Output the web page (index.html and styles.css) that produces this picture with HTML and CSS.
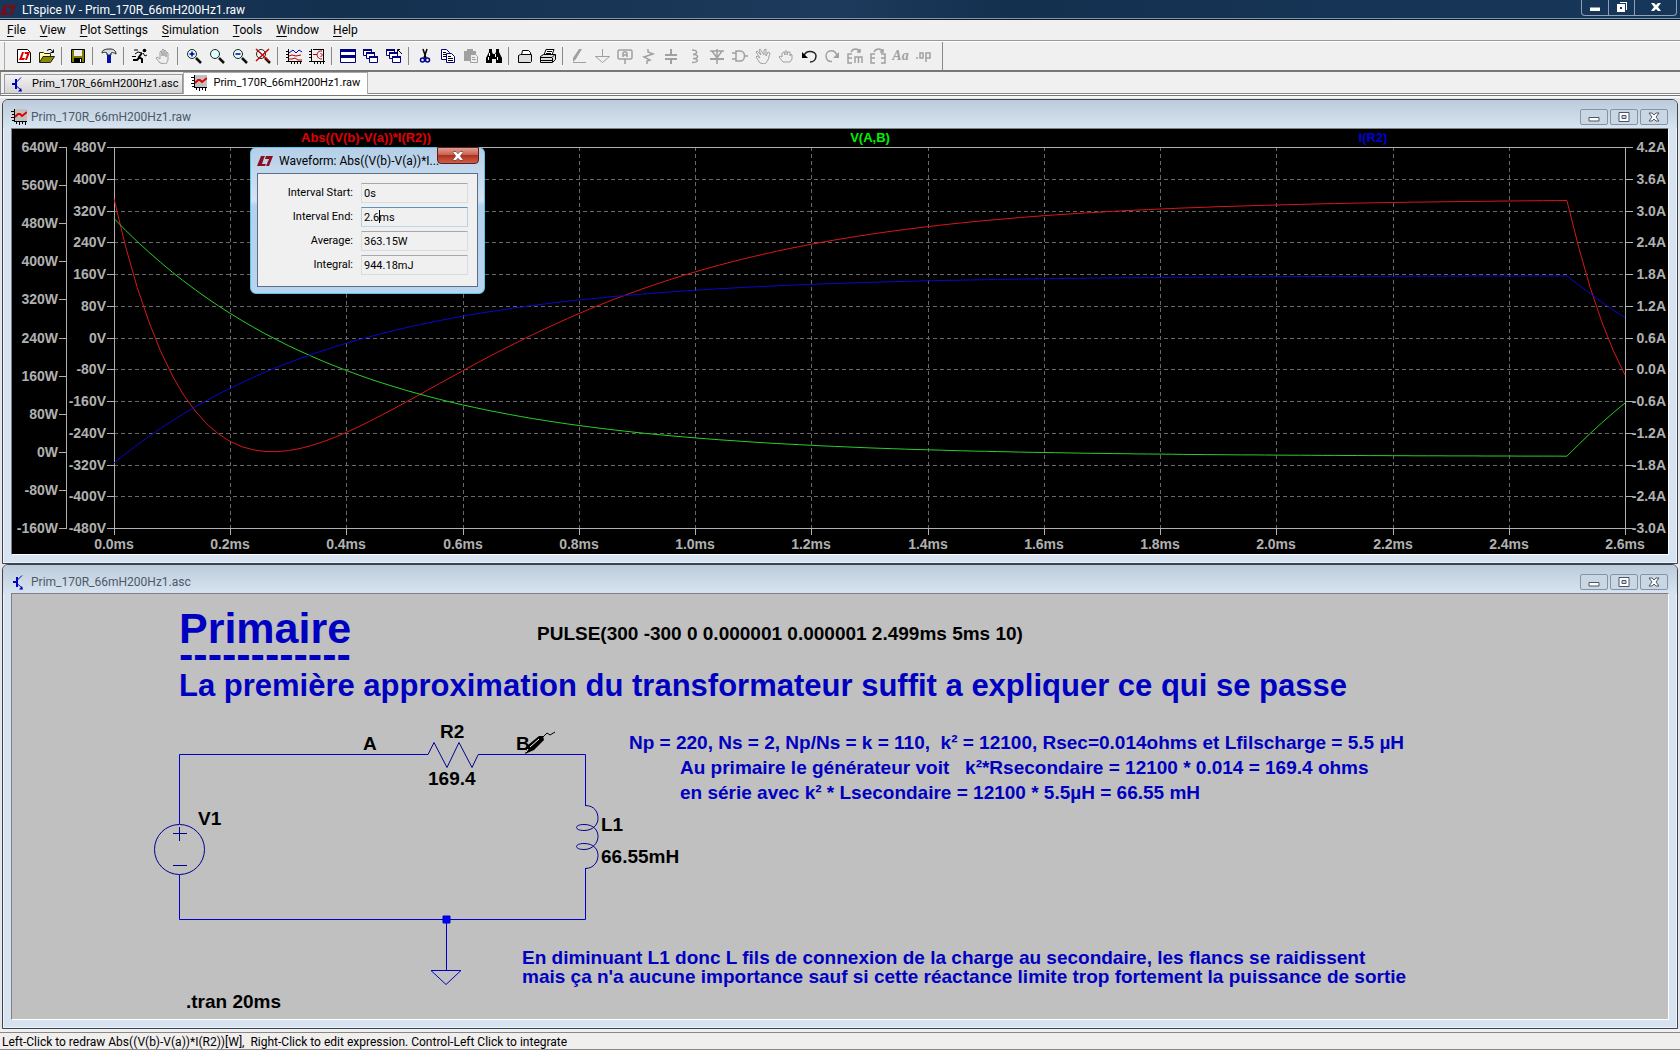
FILE: index.html
```html
<!DOCTYPE html>
<html lang="en">
<head>
<meta charset="utf-8">
<title>LTspice IV - Prim_170R_66mH200Hz1.raw</title>
<link rel="stylesheet" href="styles.css">
</head>
<body>
<svg class="defs" width="0" height="0" aria-hidden="true">
  <defs>
    <symbol id="logo" viewBox="0 0 16 12"><path d="M4 1h4L7 3 5 9h4l-1 2H0zM9 1h7l-4 10H9l3-7H8z"/></symbol>
    <symbol id="wave" viewBox="0 0 16 16"><path fill="#c0c0c0" d="M3 0h13v13H3z"/><path fill="none" stroke="#000" d="M3.500 0v13M3 12.500h13M0 2.500h3M1 5.500h2M0 8.500h3M1 11.500h2M5.500 13v2M8.500 13v3M11.500 13v2M14.500 13v3"/><path fill="none" stroke="#e00000" stroke-width="2" d="M4 8l3-3h2l2 2 5-4"/></symbol>
    <symbol id="bjt" viewBox="0 0 12 16"><path fill="none" stroke="#0000c0" stroke-width="2" d="M4 3v10M0 8h4"/><path fill="none" stroke="#0000c0" d="M4 6.500l5-5M4 9.500l5 4.500"/><path fill="#0000c0" d="M10 15.500H6L9 12z"/></symbol>
    <symbol id="min" viewBox="0 0 12 12"><path d="M1 6.500h10v3.500H1z"/></symbol>
    <symbol id="max" viewBox="0 0 12 12"><path fill-rule="evenodd" d="M1 1.500h10v9H1zM4 4.500h4v3H4z"/></symbol>
    <symbol id="restore" viewBox="0 0 12 12"><path d="M4 1h7v8h-1V2H4z"/><path fill-rule="evenodd" d="M1 3h8v8H1zM4 6h2v2H4z"/></symbol>
    <symbol id="x" viewBox="0 0 12 12"><path d="M1 2h3l2 2 2-2h3L8 6l3 4H8L6 8l-2 2H1l3-4z"/></symbol>
    <symbol id="lens" viewBox="0 0 16 16"><circle cx="6" cy="6" r="4.500" fill="#dff" stroke="#222"/><path stroke="#111" stroke-width="2.500" d="M10 10l5 5"/></symbol>
    <symbol id="panes" viewBox="0 0 16 16"><g fill="#fff" stroke="#000080"><path d="M.5 1.500h8v6h-8z"/><path d="M3.500 4.500h8v6h-8z"/><path d="M6.500 8.500h8v6h-8z"/></g><path fill="#000080" d="M0 1h9v2H0zM3 4h9v2H3zM6 8h9v2H6z"/></symbol>
    <symbol id="redoarrow" viewBox="0 0 16 16"><path fill="none" stroke="currentColor" stroke-width="1.500" d="M8 13.500C1 14 0 4 6 3c4-.7 6 1 7 5"/><path fill="currentColor" d="M15 4v6H9z"/></symbol>
  </defs>
</svg>

<header class="titlebar">
  <svg class="app-logo"><use href="#logo"/></svg>
  <h1>LTspice IV - Prim_170R_66mH200Hz1.raw</h1>
  <div class="win-buttons">
    <button aria-label="Minimize"><svg><use href="#min"/></svg></button>
    <button aria-label="Restore"><svg><use href="#restore"/></svg></button>
    <button class="wide" aria-label="Close"><svg><use href="#x"/></svg></button>
  </div>
</header>

<nav class="menubar">
  <button><u>F</u>ile</button><button><u>V</u>iew</button><button><u>P</u>lot Settings</button><button><u>S</u>imulation</button><button><u>T</u>ools</button><button><u>W</u>indow</button><button><u>H</u>elp</button>
</nav>

<div class="toolbar" role="toolbar">
  <div class="tools">
  <button aria-label="New schematic"><svg viewBox="0 0 16 16"><path fill="#fff" stroke="#000" d="M1.500 1.500h10l3 3v10h-13z"/><path fill="#e00000" d="M6 4h2L6 10h3l-1 2H3zM8.500 4H14l-3 8H9l2-6H9z"/></svg></button>
  <button aria-label="Open"><svg viewBox="0 0 16 16"><path fill="#ffffa0" stroke="#222" d="M.5 14V4.500h4l1 1h6V8"/><path fill="#8a8a00" stroke="#222" d="M.5 14.500L4 8.500h11.500l-4 6z"/><path fill="none" stroke="#000" d="M8 2.500l2-1h2l2 2.500M14.500 1.500v3h-3"/></svg></button>
  <i></i>
  <button aria-label="Save"><svg viewBox="0 0 16 16"><path fill="#808000" stroke="#000" d="M1.500 1.500h13v13h-13z"/><path fill="#eee" d="M4 2h8v6H4z"/><path d="M4 10h8v4H4z"/><path fill="#fff" d="M10 11h1v3h-1z"/></svg></button>
  <i></i>
  <button aria-label="Control panel"><svg viewBox="0 0 16 16"><path fill="#d8e0e0" stroke="#222" d="M1 5c0-3 3-4 8-4 4 0 6 2 6 5-2-1-3-2-5-1v2H6V5C4 4 3 4 1 5z"/><path fill="#0010b0" d="M6 7h4v8H6z"/></svg></button>
  <i></i>
  <button aria-label="Run"><svg viewBox="0 0 16 16"><circle cx="12.500" cy="2.500" r="1.800"/><path fill="none" stroke="#000" stroke-width="2" d="M10 5L7 9l3 2v4M8 9l-3 3H1"/><path fill="none" stroke="#000" d="M11 5l2 3 2-1M10 5L6 4 3 6M2 2h4M0 8.500h4"/></svg></button>
  <button disabled aria-label="Halt"><svg viewBox="0 0 16 16"><path fill="#eee" stroke="#a0a0a0" d="M5 15l-4-5 1-1 3 2V4l1-1 1 1v4-6l1-1 1 1v6-5l1-1 1 1v6-4l1-1 1 1v7l-2 4z"/></svg></button>
  <i></i>
  <button aria-label="Zoom in"><svg viewBox="0 0 16 16"><use href="#lens"/><path stroke="#0000a0" stroke-width="1.500" d="M6 3.500v5M3.500 6h5"/></svg></button>
  <button aria-label="Pan"><svg viewBox="0 0 16 16"><use href="#lens"/></svg></button>
  <button aria-label="Zoom out"><svg viewBox="0 0 16 16"><use href="#lens"/><path stroke="#0000a0" stroke-width="1.500" d="M3.500 6h5"/></svg></button>
  <button aria-label="Zoom fit"><svg viewBox="0 0 16 16"><use href="#lens"/><path stroke="#d00000" stroke-width="1.500" d="M1 13L14 1M1 1l13 12"/></svg></button>
  <i></i>
  <button aria-label="Autorange"><svg viewBox="0 0 16 16"><path fill="none" stroke="#000" d="M2.500 1v13M0 13.500h16M0 3.500h3M0 6.500h3M0 9.500h3M5.500 13v3M8.500 13v3M11.500 13v3M14.500 13v3"/><path fill="none" stroke="#0000b0" d="M3 5l4-3 3 3 3-3 3 2"/><path fill="none" stroke="#c00000" d="M3 8l3-1 4 1 5-1M3 11h3l3-1 3 2h4"/></svg></button>
  <button aria-label="Pick traces"><svg viewBox="0 0 16 16"><path fill="none" stroke="#000" d="M2.500 1v13M0 13.500h16M0 3.500h3M0 6.500h3M0 9.500h3M5.500 13v3M8.500 13v3M11.500 13v3M14.500 1v15M4 1.500h10"/><path fill="none" stroke="#c00000" d="M4 6.500h4M13 3c-6-1-7 8 0 8M11.500 5l2 2-2 2"/></svg></button>
  <i></i>
  <button aria-label="Tile"><svg viewBox="0 0 16 16"><path fill="#fff" stroke="#000080" d="M.5 1.500h15v13H.5z"/><path fill="#000080" d="M0 1h16v3H0zM0 7h16v3H0z"/></svg></button>
  <button aria-label="Cascade"><svg viewBox="0 0 16 16"><use href="#panes"/></svg></button>
  <button aria-label="Close all"><svg viewBox="0 0 16 16"><use href="#panes"/><path fill="none" stroke="#000" d="M11.500 4V1.500H14M12 2l4 4"/></svg></button>
  <i></i>
  <button aria-label="Cut"><svg viewBox="0 0 16 16"><path fill="none" stroke="#000" stroke-width="1.500" d="M6 1l3 9M10 1L7 10"/><g fill="none" stroke="#000090" stroke-width="1.500"><circle cx="5.500" cy="12" r="2"/><circle cx="10.500" cy="12" r="2"/></g></svg></button>
  <button aria-label="Copy"><svg viewBox="0 0 16 16"><g fill="#fff" stroke="#000080"><path d="M1.500 1.500h5l3 3v7h-8z"/><path d="M6.500 5.500h5l3 3v6h-8z"/></g><path stroke="#000" d="M3 4.500h3M3 6.500h3M3 8.500h3M8 8.500h3M8 10.500h5M8 12.500h5"/></svg></button>
  <button disabled aria-label="Paste"><svg viewBox="0 0 16 16"><path fill="#a0a0a0" d="M1 3h3V1h6v2h3v10H1z"/><path fill="#eee" stroke="#a0a0a0" d="M7.500 6.500h5l2 2v6h-7z"/><path stroke="#a0a0a0" d="M9 9.500h3M9 11.500h4"/></svg></button>
  <button aria-label="Find"><svg viewBox="0 0 16 16"><path d="M3 1h3v3l1 2h2l1-2V1h3v3l3 6v5h-6v-4H6v4H0v-5l3-6z"/><path stroke="#fff" d="M3.500 5v3M2.500 9v3M9.500 6v3M11.500 9v3"/></svg></button>
  <i></i>
  <button aria-label="Print setup"><svg viewBox="0 0 16 16"><path fill="#fff" stroke="#000" d="M4.500 7l1-4.500h6l2 2V7"/><path fill="#ddd" stroke="#000" d="M1.500 7.500l2-1h11v7l-1 1h-12z"/></svg></button>
  <button aria-label="Print"><svg viewBox="0 0 16 16"><path fill="#fff" stroke="#000" d="M4 7l2-5.500h8L12 7"/><path stroke="#000" d="M7 3.500h5M6 5.500h5"/><path fill="#ddd" stroke="#000" d="M.5 8.500l3-2h12v5l-3 3h-12z"/><path fill="none" stroke="#000" d="M1 9.500h11l3-3M1 12.500h11M12.500 10v4"/></svg></button>
  <i></i>
  <button disabled aria-label="Wire"><svg viewBox="0 0 16 16"><path fill="#a0a0a0" d="M8 1h3L5 11l-3 3V10z"/><path stroke="#a0a0a0" d="M2 14.500h13"/></svg></button>
  <button disabled aria-label="Ground"><svg viewBox="0 0 16 16"><path fill="none" stroke="#a0a0a0" d="M8.500 1v7M1.500 8.500h14l-7 6z"/></svg></button>
  <button disabled aria-label="Label net"><svg viewBox="0 0 16 16"><path fill="none" stroke="#a0a0a0" stroke-width="1.500" d="M2 2h12l1 1v7l-1 1H2l-1-1V3zM8 11v5M6 9V5l1-1h2l1 1v4M6 7h4"/></svg></button>
  <button disabled aria-label="Resistor"><svg viewBox="0 0 16 16"><path fill="none" stroke="#a0a0a0" stroke-width="1.500" d="M8 1v3l5 2-9 3 6 3-3 1v3"/></svg></button>
  <button disabled aria-label="Capacitor"><svg viewBox="0 0 16 16"><path fill="none" stroke="#a0a0a0" stroke-width="2" d="M2 7h12M2 11h12"/><path stroke="#a0a0a0" stroke-width="2" d="M8 1v6M8 11v5"/></svg></button>
  <button disabled aria-label="Inductor"><svg viewBox="0 0 16 16"><path fill="none" stroke="#a0a0a0" stroke-width="1.500" d="M6 2c6 0 6 4 1 4.500 6 0 6 4 0 4 6 0 6 4-1 4"/></svg></button>
  <button disabled aria-label="Diode"><svg viewBox="0 0 16 16"><path fill="none" stroke="#a0a0a0" stroke-width="1.500" d="M1 3h14M3 3l5 7 5-7M8 1v15"/><path stroke="#a0a0a0" stroke-width="2" d="M1 11h14"/></svg></button>
  <button disabled aria-label="Component"><svg viewBox="0 0 16 16"><path fill="none" stroke="#a0a0a0" stroke-width="1.500" d="M4 3h4c6 0 6 10 0 10H4zM0 5h4M0 11h4M12 8h4"/></svg></button>
  <button disabled aria-label="Move"><svg viewBox="0 0 16 16"><path fill="none" stroke="#a0a0a0" d="M5 15l-4-6 1-1 3 2-4-6 1-1 4 4-2-5 1-1 4 6V2l2-1v7l2-4 2 1-2 7-3 4z"/></svg></button>
  <button disabled aria-label="Drag"><svg viewBox="0 0 16 16"><path fill="none" stroke="#a0a0a0" d="M5 14l-4-5 1-1 2 1V5l2-1 1 3V3h2v4l1-3h2v4l1-2 1 1v4l-2 3z"/></svg></button>
  <button aria-label="Undo"><svg viewBox="0 0 16 16"><path fill="none" stroke="#222" stroke-width="1.500" d="M3 8c2-7 12-5 12 0 0 4-3 6-6 6"/><path d="M1 4v6h6z"/></svg></button>
  <button disabled aria-label="Redo"><svg viewBox="0 0 16 16"><use href="#redoarrow"/></svg></button>
  <button disabled aria-label="Rotate"><svg viewBox="0 0 16 16"><path fill="none" stroke="#a0a0a0" stroke-width="1.500" d="M5 6H1v9h4M1 10h4M8 15V9h7v6M11.500 9v6M4 4c2-4 7-4 9 0M13 1v3h-3"/></svg></button>
  <button disabled aria-label="Mirror"><svg viewBox="0 0 16 16"><path fill="none" stroke="#a0a0a0" stroke-width="1.500" d="M5 6H1v9h4M1 10h4M11 6h4v9h-4M15 10h-4M4 4c2-4 7-4 9 0M13 1v3h-3"/></svg></button>
  <button disabled class="aa" aria-label="Text">Aa</button>
  <button disabled aria-label="SPICE directive"><svg viewBox="0 0 16 16"><path fill="none" stroke="#a0a0a0" stroke-width="1.500" d="M0 10h2M4 5h3v5H4zM10 14V5h4v5h-4"/></svg></button>
  </div>
</div>

<div class="tabs" role="tablist">
  <button role="tab"><svg class="bjt"><use href="#bjt"/></svg>Prim_170R_66mH200Hz1.asc</button>
  <button role="tab" aria-selected="true" class="active"><svg><use href="#wave"/></svg>Prim_170R_66mH200Hz1.raw</button>
</div>

<main class="workspace">
  <section class="mdi">
    <header><svg><use href="#wave"/></svg><h2>Prim_170R_66mH200Hz1.raw</h2>
      <div class="mdi-buttons"><button aria-label="Minimize"><svg><use href="#min"/></svg></button><button aria-label="Maximize"><svg><use href="#max"/></svg></button><button aria-label="Close"><svg><use href="#x"/></svg></button></div>
    </header>
    <div class="pane plot-pane"><svg id="plot" role="img" aria-label="Waveforms"></svg></div>

    <form class="dialog">
      <header><svg><use href="#logo"/></svg><h3>Waveform: Abs((V(b)-V(a))*I...</h3></header>
      <button type="button" class="dialog-close" aria-label="Close"><svg><use href="#x"/></svg></button>
      <div class="fields">
        <label for="start">Interval Start:</label><input id="start" value="0s">
        <label for="end">Interval End:</label><span class="editing"><input id="end" value="2.6ms"></span>
        <label for="avg">Average:</label><input id="avg" value="363.15W" readonly>
        <label for="int">Integral:</label><input id="int" value="944.18mJ" readonly>
      </div>
    </form>
  </section>

  <section class="mdi">
    <header><svg class="bjt"><use href="#bjt"/></svg><h2>Prim_170R_66mH200Hz1.asc</h2>
      <div class="mdi-buttons"><button aria-label="Minimize"><svg><use href="#min"/></svg></button><button aria-label="Maximize"><svg><use href="#max"/></svg></button><button aria-label="Close"><svg><use href="#x"/></svg></button></div>
    </header>
    <div class="pane sheet-pane">
      <svg class="sheet" role="img" aria-label="Schematic">
        <g transform="translate(-12 -594)">
          <g class="wires">
            <path d="M179.500 824V754.500H428M478 754.500h107.500V805M585.500 868v51.500h-406V875M446.500 919v51"/>
            <path d="M431 970.500h30l-15 14z"/>
            <path class="node" d="M443 916h7v7h-7z"/>
          </g>
          <g class="parts">
            <path d="M428 754.500l6-12 13 25 12-25 13 25 6-12.500"/>
            <circle cx="179.500" cy="849.500" r="25"/>
            <path d="M173 833.500h14M179.500 827v14M173 865.500h14"/>
            <path d="M585 805.500c10 0 13 7 13 13s-5 12-14 12c-10 0-10-6 0-6s14 6 14 12-5 13-14 13c-10 0-10-6 0-6s14 6 14 12-4 13-13 13"/>
          </g>
          <g class="names">
            <text x="537" y="640">PULSE(300 -300 0 0.000001 0.000001 2.499ms 5ms 10)</text>
            <text x="363" y="750">A</text><text x="516" y="750">B</text>
            <text x="440" y="738">R2</text><text x="428" y="785">169.4</text>
            <text x="198" y="825">V1</text><text x="601" y="831">L1</text><text x="601" y="863">66.55mH</text>
            <text x="186" y="1008">.tran 20ms</text>
          </g>
          <g class="notes">
            <text class="xl" x="179" y="643">Primaire</text><text class="xl" x="179" y="669">------------</text>
            <text class="l" x="179" y="696">La première approximation du transformateur suffit a expliquer ce qui se passe</text>
            <text x="629" y="749">Np = 220, Ns = 2, Np/Ns = k = 110,&#160; k² = 12100, Rsec=0.014ohms et Lfilscharge = 5.5 µH</text>
            <text x="680" y="774">Au primaire le générateur voit &#160; k²*Rsecondaire = 12100 * 0.014 = 169.4 ohms</text>
            <text x="680" y="799">en série avec k² * Lsecondaire = 12100 * 5.5µH = 66.55 mH</text>
            <text x="522" y="964">En diminuant L1 donc L fils de connexion de la charge au secondaire, les flancs se raidissent</text>
            <text x="522" y="983">mais ça n'a aucune importance sauf si cette réactance limite trop fortement la puissance de sortie</text>
          </g>
          <g class="probe">
            <path d="M525 754l3-9 11-9h4l1 4-10 10z"/><path class="shine" d="M530 747l9-8M526 752l2-3"/>
            <path class="lead" d="M543 737l4-4 3 2 5-3"/>
          </g>
        </g>
      </svg>
    </div>
  </section>
</main>

<footer class="status">Left-Click to redraw Abs((V(b)-V(a))*I(R2))[W],&#160; Right-Click to edit expression. Control-Left Click to integrate</footer>
<script src="plot.js"></script>
</body>
</html>
```
FILE: styles.css
```css
* { box-sizing: border-box; }
body {
  margin: 0;
  min-height: 100vh;
  display: flex;
  flex-direction: column;
  background: #f0f0f0;
  color: #000;
  font: 12px/16px Roboto, "Open Sans", sans-serif;
}
h1, h2, h3 { margin: 0; font: inherit; }
button { margin: 0; padding: 0; border: 0; background: none; font: inherit; color: inherit; }
svg { display: block; flex: none; }
.defs { position: absolute; }

.titlebar {
  display: flex;
  align-items: center;
  height: 20px;
  padding-right: 3px;
  background: linear-gradient(90deg, #17375c, #14304f 20%, #1d3a5c 50%, #14304f 60%, #17375a);
  border-bottom: 1px solid #0a1c30;
  box-shadow: inset 0 -1px #8494a6;
  color: #fff;
}
.titlebar h1 { flex: 1; }
.app-logo { width: 16px; height: 12px; margin-right: 6px; fill: #780d18; }
.win-buttons {
  display: flex;
  align-self: flex-start;
  height: 16px;
  border: 1px solid #8fa0b4;
  border-top: 0;
  border-radius: 0 0 4px 4px;
}
.win-buttons button { display: grid; place-items: center; width: 26px; padding-bottom: 2px; }
.win-buttons button + button { border-left: 1px solid #8fa0b4; }
.win-buttons .wide { width: 42px; }
.win-buttons svg { width: 12px; height: 12px; fill: #fff; }

.menubar { display: flex; height: 21px; border-bottom: 1px solid #999; }
.menubar button { padding: 0 7px; }
.menubar u { text-underline-offset: 2px; }

.toolbar { height: 31px; border-top: 1px solid #fff; border-bottom: 2px solid #777; }
.tools { display: flex; align-items: center; width: max-content; height: 28px; padding: 0 7px; margin-left: 4px; border-left: 1px solid #aaa; border-right: 1px solid #888; }
.tools button { display: grid; place-items: center; width: 23px; height: 22px; }
.tools svg { width: 16px; height: 16px; }
.tools i { width: 1px; height: 18px; margin: 0 4px 0 3px; background: #888; }
.tools button:disabled { color: #a0a0a0; }
.tools .aa { font: italic bold 14px/16px "Liberation Serif", serif; }

.tabs {
  display: flex;
  align-items: flex-end;
  height: 24px;
  padding: 0 0 0 3px;
  border-left: 1px solid #888;
  box-shadow: inset 0 -1px #777, inset 0 -2px #fff, inset 0 -3px #888;
}
.tabs button {
  display: flex;
  align-items: center;
  gap: 8px;
  height: 19px;
  margin-bottom: 3px;
  padding: 0 4px 0 7px;
  border: 1px solid #999;
  border-bottom: 0;
  background: linear-gradient(#f2f2f2, #d4d4d4);
  font-size: 11px;
}
.tabs svg { width: 16px; height: 16px; }
.tabs .bjt { width: 12px; }
.tabs .active { height: 22px; gap: 6px; margin-bottom: 2px; padding: 0 7px 2px; border-color: #aaa; background: #fff; }

.workspace { flex: 1; display: flex; flex-direction: column; padding: 1px 2px 0; background: #e4e6e8; border-top: 2px solid #f8f8f8; }
.mdi {
  position: relative;
  flex: 1;
  display: flex;
  flex-direction: column;
  padding: 0 8px 8px;
  border: 1px solid #3c444c;
  border-radius: 6px 6px 0 0;
  background: #d7e3f0;
  box-shadow: inset 0 0 0 1px #eaf2fa;
}
.mdi > header {
  display: flex;
  align-items: center;
  height: 28px;
  margin: 0 -8px;
  padding: 5px 9px 0 8px;
  background: linear-gradient(#bccbdb, #d7e3f0);
  border-radius: 5px 5px 0 0;
  color: #4c5966;
}
.mdi > header > svg { width: 16px; height: 16px; margin-right: 4px; }
.mdi > header > .bjt { width: 12px; margin: 0 6px 0 2px; }
.mdi h2 { flex: 1; }
.mdi-buttons { display: flex; gap: 2px; }
.mdi-buttons button {
  display: grid;
  place-items: center;
  width: 28px;
  height: 16px;
  border: 1px solid #8793a5;
  border-radius: 2px;
  background: #c9d6e4;
}
.mdi-buttons svg { width: 12px; height: 12px; fill: #fff; stroke: #4c5566; stroke-width: 1; }
.pane { position: relative; flex: 1; min-height: 400px; border: 1px solid #808080; border-right-color: #fff; border-bottom-color: #fff; }
.plot-pane { background: #000; }
.sheet-pane { background: #c0c0c0; }
.pane > svg { position: absolute; inset: 0; width: 100%; height: 100%; }

#plot { font: bold 14px "Liberation Sans", sans-serif; }
#plot .axis { stroke: #b0b0b0; fill: none; shape-rendering: crispEdges; }
#plot .grid { stroke: #686868; stroke-dasharray: 4 3; fill: none; shape-rendering: crispEdges; }
#plot .tick { fill: #b0b0b0; }
#plot .end { text-anchor: end; }
#plot .mid { text-anchor: middle; }
#plot polyline { fill: none; }
#plot .red { stroke: #d81818; }
#plot .green { stroke: #28d028; }
#plot .blue { stroke: #0808d0; }
#plot .name { font-size: 13px; }
#plot .red-name { fill: #e00000; }
#plot .green-name { fill: #00f000; }
#plot .blue-name { fill: #0000d8; }

.sheet { font: bold 19px "Liberation Sans", sans-serif; }
.wires { fill: none; stroke: #0000c8; }
.wires .node { fill: #0000ff; }
.parts { fill: none; stroke: #000090; }
.notes { fill: #0000c0; }
.xl { font-size: 43px; }
.l { font-size: 31px; }
.probe .shine { stroke: #fff; }
.probe .lead { fill: none; stroke: #000; }

.dialog {
  position: absolute;
  left: 247px;
  top: 47px;
  width: 235px;
  padding: 0 6px 6px;
  border: 1px solid #5cc4e8;
  border-radius: 6px;
  background: linear-gradient(#b4cfe8, #d4e4f4 36%, #b4d0ec 40%, #b8d4ee);
}
.dialog > header { display: flex; align-items: center; gap: 6px; height: 25px; }
.dialog > header svg { width: 16px; height: 12px; fill: #8a1020; }
.dialog-close {
  position: absolute;
  right: 5px;
  top: -1px;
  display: grid;
  place-items: center;
  width: 42px;
  height: 17px;
  border: 1px solid #5c2020;
  border-radius: 0 0 4px 4px;
  background: linear-gradient(#e0a090, #c86050 45%, #b03020 50%, #cc6048);
}
.dialog-close svg { width: 12px; height: 12px; fill: #fff; stroke: #633; stroke-width: 1; paint-order: stroke; }
.fields {
  display: grid;
  grid-template-columns: 95px 107px;
  justify-content: start;
  column-gap: 8px;
  row-gap: 4px;
  align-items: center;
  padding: 9px 0 11px;
  border: 1px solid #5b7088;
  background: #f0f0f0;
  font-size: 11px;
}
.fields label { text-align: right; }
.fields input {
  display: block;
  width: 100%;
  height: 20px;
  padding: 0 2px;
  border: 1px solid #d8dce0;
  border-top-color: #a8a8a8;
  background: #f0f0f0;
  font: inherit;
  color: #000;
}
.editing { position: relative; }
.editing input { border-color: #5794bf #b5cfe7 #b7d9ed; }
.editing::after { content: ""; position: absolute; left: 18px; top: 3px; width: 1px; height: 13px; background: #000; }

.status { height: 18px; padding: 0 2px; margin-top: 3px; border-top: 1px solid #888; border-bottom: 1px solid #888; line-height: 18px; background: #f1eeee; }
```
FILE: plot.js
```js
// Draws the transient result of a 300 V square pulse into R = 169.4 ohm, L = 66.55 mH.
const svg = document.getElementById("plot");
const NS = "http://www.w3.org/2000/svg";
const TAU = 66.55 / 169.4, IMAX = 300 / 169.4, T_END = 2.6;

function add(tag, attrs, text) {
  const el = document.createElementNS(NS, tag);
  for (const k in attrs) el.setAttribute(k, attrs[k]);
  if (text) el.textContent = text;
  svg.appendChild(el);
}
function current(t) {
  return t <= 2.5 ? IMAX * (1 - 2 * Math.exp(-t / TAU)) : IMAX * (2 * Math.exp(-(t - 2.5) / TAU) - 1);
}
function draw() {
  svg.replaceChildren();
  const W = svg.clientWidth, H = svg.clientHeight;
  const l = 102, r = W - 43, t = 18, b = H - 26, wAxis = 54;
  const px = v => Math.round(v) + 0.5;
  const X = ms => l + (r - l) * ms / T_END;
  const Y = (v, lo, hi) => b - (b - t) * (v - lo) / (hi - lo);

  for (let i = 1; i < 12; i++) add("path", { class: "grid", d: `M${l} ${px(t + (b - t) * i / 12)}H${r}` });
  for (let i = 1; i < 13; i++) add("path", { class: "grid", d: `M${px(X(i * 0.2))} ${t}V${b}` });
  add("path", { class: "axis", d: `M${l + .5} ${t + .5}H${r + .5}V${b + .5}H${l + .5}z` });
  add("path", { class: "axis", d: `M${wAxis + .5} ${t}V${b + 1}` });

  for (let i = 0; i <= 12; i++) {
    const y = t + (b - t) * i / 12;
    add("path", { class: "axis", d: `M${l - 7} ${px(y)}h7M${r} ${px(y)}h8` });
    add("text", { class: "tick end", x: l - 8, y: Math.round(y) + 5 }, 480 - 80 * i + "V");
    add("text", { class: "tick end", x: W - 2, y: Math.round(y) + 5 }, (4.2 - 0.6 * i).toFixed(1).replace("-0.0", "0.0") + "A");
  }
  for (let i = 0; i <= 10; i++) {
    const y = t + (b - t) * i / 10;
    add("path", { class: "axis", d: `M${wAxis - 7} ${px(y)}h7` });
    add("text", { class: "tick end", x: wAxis - 8, y: Math.round(y) + 5 }, 640 - 80 * i + "W");
  }
  for (let i = 0; i <= 13; i++) {
    add("path", { class: "axis", d: `M${px(X(i * 0.2))} ${b}v7` });
    add("text", { class: "tick mid", x: Math.round(X(i * 0.2)), y: b + 21 }, (i * 0.2).toFixed(1) + "ms");
  }

  const traces = [
    ["red", "Abs((V(b)-V(a))*I(R2))", i => Y(169.4 * i * i, -160, 640)],
    ["green", "V(A,B)", i => Y(-169.4 * i, -480, 480)],
    ["blue", "I(R2)", i => Y(i, -3, 4.2)]
  ];
  traces.forEach(([color, name, map], n) => {
    const pts = [];
    for (let k = 0; k <= 130; k++) {
      const ms = k * 0.02;
      pts.push(X(ms).toFixed(1) + "," + map(current(ms)).toFixed(1));
    }
    add("polyline", { class: color, points: pts.join(" ") });
    add("text", { class: `name mid ${color}-name`, x: Math.round(l + (r - l) * (2 * n + 1) / 6), y: 13 }, name);
  });
}
draw();
window.addEventListener("resize", draw);
```
